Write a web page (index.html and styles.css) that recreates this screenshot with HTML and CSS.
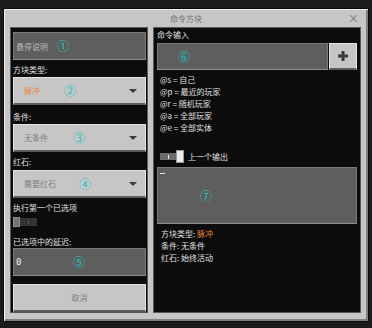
FILE: index.html
```html
<!DOCTYPE html>
<html lang="zh">
<head>
    <meta charset="UTF-8">
    <meta name="viewport" content="width=device-width, initial-scale=1.0">
    <title>命令方块</title>
    <link rel="stylesheet" href="styles.css">
</head>
<body>
    <div class="window">
        <div class="titlebar">
            <span></span>
            <span class="title">命令方块</span>
            <span class="close">×</span>
        </div>
        <div class="content">
            <div class="panel left">
                <div class="textbox hint">悬停说明<span class="mark m1">①</span></div>
                <div class="label l1">方块类型:</div>
                <div class="dropdown"><span class="orange">脉冲</span><span class="mark m2">②</span><span class="arrow"></span></div>
                <div class="label l2">条件:</div>
                <div class="dropdown"><span>无条件</span><span class="mark m3">③</span><span class="arrow"></span></div>
                <div class="label l3">红石:</div>
                <div class="dropdown"><span>需要红石</span><span class="mark m4">④</span><span class="arrow"></span></div>
                <div class="label l4">执行第一个已选项</div>
                <div class="toggle off">
                    <span class="knob"></span>
                    <span class="track"><i></i></span>
                </div>
                <div class="label l5">已选项中的延迟:</div>
                <div class="textbox value">0<span class="mark m5">⑤</span></div>
                <div class="button cancel">取消</div>
            </div>
            <div class="panel right">
                <div class="label cmd">命令输入</div>
                <div class="cmd-row">
                    <div class="textbox cmd-input"><span class="mark m6">⑥</span></div>
                    <div class="button plus">
                        <svg width="10" height="10" viewBox="0 0 10 10"><path d="M3.5 0h3v3.5H10v3H6.5V10h-3V6.5H0v-3h3.5z" fill="#3a3a3a"/></svg>
                    </div>
                </div>
                <div class="selectors">
                    <div>@s = 自己</div>
                    <div>@p = 最近的玩家</div>
                    <div>@r = 随机玩家</div>
                    <div>@a = 全部玩家</div>
                    <div>@e = 全部实体</div>
                </div>
                <div class="toggle-row">
                    <div class="toggle on">
                        <span class="track"><i></i></span>
                        <span class="knob"></span>
                    </div>
                    <span>上一个输出</span>
                </div>
                <div class="output">
                    <span class="cursor"></span>
                    <span class="mark m7">⑦</span>
                </div>
                <div class="summary">
                    <div>方块类型: <span class="orange">脉冲</span></div>
                    <div>条件: 无条件</div>
                    <div>红石: 始终活动</div>
                </div>
            </div>
        </div>
    </div>
</body>
</html>
```

FILE: styles.css
```css
body {
    margin: 0;
    background-color: #1c1c1c;
    font-family: "Noto Sans CJK SC", sans-serif;
    font-size: 8px;
    color: #e0e0e0;
}

.window {
    margin: 8px 0 0 3px;
    width: 366px;
    height: 314px;
    box-sizing: border-box;
    background-color: #c6c6c6;
    border: 1px solid #0a0a0a;
    box-shadow: inset 1px 1px 0 #f0f0f0, inset -2px -2px 0 #808080;
    display: flex;
    flex-direction: column;
}

.titlebar {
    height: 18px;
    padding: 0 9px;
    display: grid;
    grid-template-columns: 1fr auto 1fr;
    align-items: center;
    color: #6e6e6e;
}
.close {
    justify-self: end;
    font-size: 11px;
    line-height: 11px;
}

.content {
    height: 286px;
    padding: 0 7px 0 6px;
    display: flex;
    gap: 5px;
}

.panel {
    box-sizing: border-box;
    background-color: #0c0c0c;
    border: 1px solid #5a5a5a;
    display: flex;
    flex-direction: column;
}
.left {
    width: 138px;
    padding: 4px 1px 0 2px;
}
.right {
    width: 208px;
    padding: 0 3px;
}

.label {
    box-sizing: border-box;
    line-height: 10px;
}
.l1 { height: 17px; padding-top: 5px; }
.l2 { height: 19px; padding-top: 7px; }
.l3 { height: 18px; padding-top: 5px; }
.l4 { height: 19px; padding-top: 5px; }
.l5 { height: 21px; padding-top: 10px; }
.cmd { height: 15px; padding-top: 2px; }

/* fields */
.textbox, .dropdown, .button {
    position: relative;
    box-sizing: border-box;
    height: 28px;
    display: flex;
    align-items: center;
}
.textbox {
    background-color: #5e5e5e;
    border: 1px solid #7a7a7a;
    border-bottom-color: #909090;
    padding-left: 2px;
}
.hint {
    color: #b8b8b8;
}
.value {
    color: #f0f0f0;
    font-family: "DejaVu Sans Mono", monospace;
    font-size: 9px;
}
.dropdown {
    background-color: #c6c6c6;
    border: 1px solid #e4e4e4;
    border-bottom: 2px solid #5c5c5c;
    padding-left: 10px;
    color: #7c7c7c;
}
.arrow {
    position: absolute;
    right: 8px;
    top: 11px;
    width: 0;
    height: 0;
    border-left: 4px solid transparent;
    border-right: 4px solid transparent;
    border-top: 4px solid #3a3a3a;
}
.orange {
    color: #e5863b;
}
.button {
    justify-content: center;
    background-color: #c6c6c6;
    border: 1px solid #e4e4e4;
    border-bottom: 2px solid #5c5c5c;
    color: #7c7c7c;
}
.cancel {
    margin-top: 8px;
}

/* annotation markers */
.mark {
    position: absolute;
    top: 50%;
    transform: translateY(-50%);
    color: #22c4c4;
    font-family: "Noto Sans CJK SC", sans-serif;
    font-size: 12px;
    line-height: 12px;
}
.m1 { left: 43px; }
.m2 { left: 50px; }
.m3 { left: 59px; }
.m4 { left: 65px; }
.m5 { left: 59px; }
.m6 { left: 20px; }
.m7 { left: 42px; }

/* toggles */
.toggle {
    display: flex;
    align-items: center;
}
.toggle .track {
    display: flex;
    align-items: center;
    justify-content: center;
}
.toggle i {
    display: block;
    width: 1px;
    height: 4px;
}
.off {
    height: 10px;
}
.off .knob {
    width: 7px;
    height: 10px;
    box-sizing: border-box;
    background-color: #747474;
    border: 1px solid #8c8c8c;
}
.off .track {
    width: 17px;
    height: 8px;
    background-color: #333;
}
.off i {
    background-color: #5a5a5a;
}
.on .track {
    width: 16px;
    height: 7px;
    background-color: #6c6c6c;
}
.on i {
    background-color: #f0f0f0;
}
.on .knob {
    width: 8px;
    height: 13px;
    box-sizing: border-box;
    background-color: #ececec;
    border: 1px solid #9a9a9a;
}

/* right column */
.cmd-row {
    display: flex;
    gap: 1px;
}
.cmd-input {
    width: 171px;
    height: 27px;
}
.plus {
    width: 28px;
    height: 27px;
}
.selectors {
    margin-top: 4px;
    line-height: 12px;
    padding-left: 3px;
}
.toggle-row {
    margin-top: 16px;
    height: 13px;
    padding-left: 3px;
    display: flex;
    align-items: center;
    gap: 4px;
}
.output {
    position: relative;
    margin-top: 4px;
    height: 57px;
    box-sizing: border-box;
    background-color: #5e5e5e;
    border: 1px solid #7a7a7a;
    border-bottom-color: #909090;
    padding: 5px 0 0 2px;
}
.output .mark {
    top: 28px;
}
.cursor {
    display: block;
    width: 5px;
    height: 1px;
    background-color: #e0e0e0;
}
.summary {
    margin-top: 4px;
    line-height: 12px;
    padding-left: 4px;
}
```
